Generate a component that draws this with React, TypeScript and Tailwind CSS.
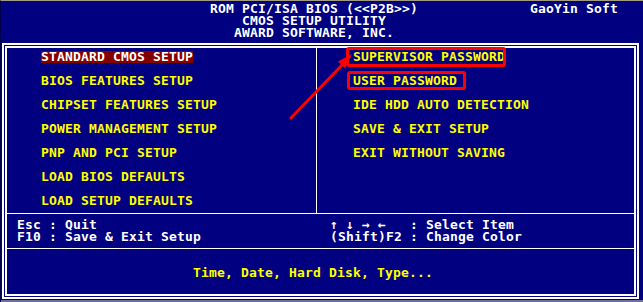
import React from "react";

const leftItems = [
  "STANDARD CMOS SETUP",
  "BIOS FEATURES SETUP",
  "CHIPSET FEATURES SETUP",
  "POWER MANAGEMENT SETUP",
  "PNP AND PCI SETUP",
  "LOAD BIOS DEFAULTS",
  "LOAD SETUP DEFAULTS",
];

const rightItems = [
  "SUPERVISOR PASSWORD",
  "USER PASSWORD",
  "IDE HDD AUTO DETECTION",
  "SAVE & EXIT SETUP",
  "EXIT WITHOUT SAVING",
];

export default function App() {
  return (
    <div className="relative w-[643px] h-[302px] overflow-hidden bg-[#000080] border-t border-t-[#a39c80] border-l border-l-[#00004a] pt-[2px] font-['DejaVu_Sans_Mono',monospace] font-bold text-[13px] leading-[12px] tracking-[0.17px] whitespace-pre">
      {/* Header */}
      <div className="flex flex-col text-white">
        <div className="flex h-[12px]">
          <span className="ml-[209px]">ROM PCI/ISA BIOS (&lt;&lt;P2B&gt;&gt;)</span>
          <span className="ml-[112px]">GaoYin Soft</span>
        </div>
        <div className="h-[12px] ml-[241px]">CMOS SETUP UTILITY</div>
        <div className="h-[12px] ml-[233px]">AWARD SOFTWARE, INC.</div>
      </div>

      {/* Main double-bordered box */}
      <div className="mt-[4px] ml-[1px] w-[637px] h-[256px] border-2 border-white p-[1px]">
        <div className="w-full h-full border-2 border-white flex flex-col">
          {/* Menu */}
          <div className="h-[166px] flex border-b border-white">
            <div className="w-[310px] border-r border-white pt-[3px] pl-[34px] flex flex-col gap-[12px] text-[#ffff00]">
              {leftItems.map((t, i) => (
                <div key={t} className="h-[12px] flex">
                  <span className={i === 0 ? "inline-block h-[12px] bg-[#840000] text-white" : "inline-block h-[12px]"}>{t}</span>
                </div>
              ))}
            </div>
            <div className="flex-1 pt-[3px] pl-[36px] flex flex-col gap-[12px] text-[#ffff00]">
              {rightItems.map((t) => (
                <div key={t} className="h-[12px]">{t}</div>
              ))}
            </div>
          </div>

          {/* Key help */}
          <div className="h-[35px] border-b border-white pt-[5px] pl-[10px] flex text-white">
            <div className="w-[313px] flex flex-col">
              <div className="h-[12px]">Esc : Quit</div>
              <div className="h-[12px]">F10 : Save &amp; Exit Setup</div>
            </div>
            <div className="flex flex-col">
              <div className="h-[12px]">{"↑ ↓ → ←   : Select Item"}</div>
              <div className="h-[12px]">(Shift)F2 : Change Color</div>
            </div>
          </div>

          {/* Status */}
          <div className="flex-1 pt-[18px] pl-[186px] text-[#ffff00]">
            <div className="h-[12px]">Time, Date, Hard Disk, Type...</div>
          </div>
        </div>
      </div>

      {/* Bottom screen edge */}
      <div className="mt-[1px] h-[2px] bg-[#6f6f99]" />

      {/* Annotations */}
      <div className="absolute left-[345px] top-[46px] w-[160px] h-[20px] border-[3px] border-[#ff0000] rounded-[3px]" />
      <div className="absolute left-[346px] top-[70px] w-[119px] h-[19px] border-[3px] border-[#ff0000] rounded-[3px]" />
      <svg
        className="absolute left-[-1px] top-[-1px] pointer-events-none"
        width="643"
        height="302"
        viewBox="0 0 643 302"
      >
        <line x1="291" y1="118" x2="344" y2="63" stroke="#ff0000" strokeWidth="3" strokeLinecap="round" />
        <polygon points="352,54 338,61.4 345.2,68.4" fill="#ff0000" />
      </svg>
    </div>
  );
}
